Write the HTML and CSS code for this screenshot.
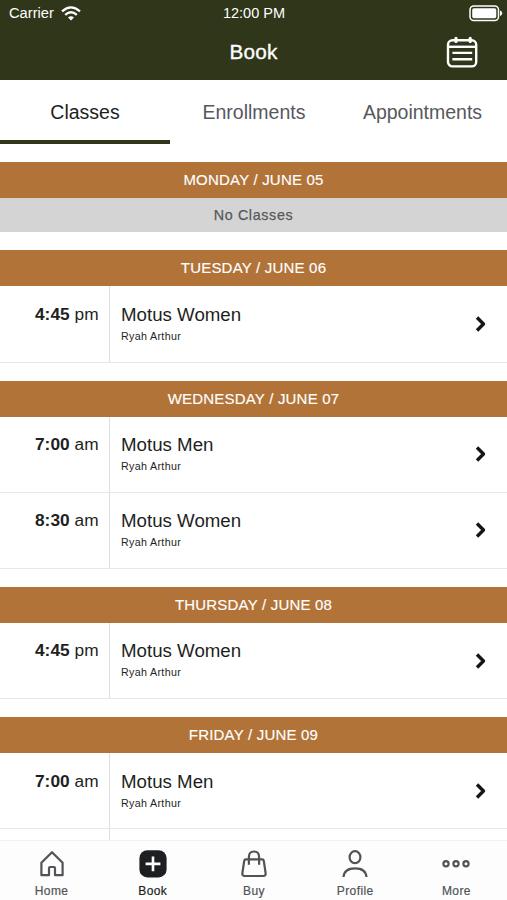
FILE: index.html
```html
<!DOCTYPE html>
<html lang="en">
<head>
<meta charset="utf-8">
<title>Book</title>
<link rel="stylesheet" href="styles.css">
</head>
<body>
<div class="app">
  <header class="header">
    <div class="status">
      <div class="carrier"><span>Carrier</span>
        <svg width="20" height="15" viewBox="0 0 20 15" fill="none" stroke="#fff" stroke-width="2.3"><path d="M1 5.3Q10-2.6 19 5.3"/><path d="M4.2 8.8Q10 3.7 15.8 8.8"/><path d="M10 14.6 7 11.5Q10 9 13 11.5Z" fill="#fff" stroke="none"/></svg>
      </div>
      <div class="clock">12:00 PM</div>
      <svg class="battery" width="34" height="17" viewBox="0 0 34 17"><rect x="1" y="1" width="28.5" height="14.5" rx="3.8" fill="none" stroke="#fff" stroke-width="1.5"/><rect x="3.2" y="3.2" width="24.1" height="10.1" rx="1.8" fill="#fff"/><path d="M31 5.4Q33.2 6.2 33.2 8.2T31 11Z" fill="#fff"/></svg>
    </div>
    <div class="titlebar">
      <h1 class="title">Book</h1>
      <svg class="calendar" width="32" height="32" viewBox="0 0 32 32" fill="none" stroke="#fff" stroke-width="2.4"><rect x="2" y="4.2" width="28.2" height="26.2" rx="4.5"/><path d="M2 10.8H30"/><path d="M10 2.3V5.5M24.2 2.3V5.5" stroke-width="3.2" stroke-linecap="round"/><path d="M6.4 16.9H26.2M6.4 23.3H26.2"/></svg>
    </div>
  </header>
  <nav class="tabs">
    <div class="tab active">Classes</div>
    <div class="tab">Enrollments</div>
    <div class="tab">Appointments</div>
  </nav>
  <main class="schedule">
    <section class="day">
      <h2 class="date">MONDAY / JUNE 05</h2>
      <div class="empty">No Classes</div>
    </section>
    <section class="day">
      <h2 class="date">TUESDAY / JUNE 06</h2>
      <div class="row"><div class="time"><b>4:45</b> pm</div><div class="info"><div class="name">Motus Women</div><div class="coach">Ryah Arthur</div></div><svg class="chevron" width="12" height="18" viewBox="0 0 12 18"><path d="M2 2.5 8.5 9 2 15.5"/></svg></div>
    </section>
    <section class="day">
      <h2 class="date">WEDNESDAY / JUNE 07</h2>
      <div class="row"><div class="time"><b>7:00</b> am</div><div class="info"><div class="name">Motus Men</div><div class="coach">Ryah Arthur</div></div><svg class="chevron" width="12" height="18" viewBox="0 0 12 18"><path d="M2 2.5 8.5 9 2 15.5"/></svg></div>
      <div class="row"><div class="time"><b>8:30</b> am</div><div class="info"><div class="name">Motus Women</div><div class="coach">Ryah Arthur</div></div><svg class="chevron" width="12" height="18" viewBox="0 0 12 18"><path d="M2 2.5 8.5 9 2 15.5"/></svg></div>
    </section>
    <section class="day">
      <h2 class="date">THURSDAY / JUNE 08</h2>
      <div class="row"><div class="time"><b>4:45</b> pm</div><div class="info"><div class="name">Motus Women</div><div class="coach">Ryah Arthur</div></div><svg class="chevron" width="12" height="18" viewBox="0 0 12 18"><path d="M2 2.5 8.5 9 2 15.5"/></svg></div>
    </section>
    <section class="day">
      <h2 class="date">FRIDAY / JUNE 09</h2>
      <div class="row"><div class="time"><b>7:00</b> am</div><div class="info"><div class="name">Motus Men</div><div class="coach">Ryah Arthur</div></div><svg class="chevron" width="12" height="18" viewBox="0 0 12 18"><path d="M2 2.5 8.5 9 2 15.5"/></svg></div>
      <div class="row"><div class="time"></div></div>
    </section>
  </main>
  <nav class="bottom">
    <div class="item"><svg width="28" height="28" viewBox="0 0 28 28"><path d="M3.4 12.7 14 2.2 24.6 12.7V25.2H17V18.2Q17 17 15.8 17H12.2Q11 17 11 18.2V25.2H3.4Z"/></svg><span>Home</span></div>
    <div class="item current"><svg width="28" height="28" viewBox="0 0 28 28"><rect x=".4" y=".2" width="27.2" height="27.2" rx="8" fill="#1e1f23" stroke="none"/><path d="M14 6.5V21.3M6.6 13.9H21.4" stroke="#fff" stroke-width="2.6"/></svg><span>Book</span></div>
    <div class="item"><svg width="28" height="28" viewBox="0 0 28 28"><path d="M5.9 9.3H22.1Q23.6 9.3 23.8 10.8L25.6 23Q26 26 23.2 26H4.8Q2 26 2.4 23L4.2 10.8Q4.4 9.3 5.9 9.3ZM8.9 14.8V6.9Q8.9 1.5 14 1.5T19.1 6.9V14.8"/></svg><span>Buy</span></div>
    <div class="item"><svg width="28" height="28" viewBox="0 0 28 28"><ellipse cx="14" cy="7.2" rx="5.4" ry="6"/><path d="M2.5 27C3 20.8 8 18.3 14 18.3S25 20.8 25.5 27"/></svg><span>Profile</span></div>
    <div class="item"><svg width="28" height="28" viewBox="0 0 28 28"><circle cx="4" cy="13.8" r="2.6"/><circle cx="14" cy="13.8" r="2.6"/><circle cx="24" cy="13.8" r="2.6"/></svg><span>More</span></div>
  </nav>
</div>
</body>
</html>
```

FILE: styles.css
```css
* { box-sizing: border-box; }
body { margin: 0; background: #fff; color: #1e1f23; font-family: "Liberation Sans", Arial, sans-serif; }
svg { display: block; flex: none; }
.app { display: flex; flex-direction: column; width: 507px; height: 900px; overflow: hidden; }
.header { flex: none; height: 80px; background: #303619; color: #fff; }
.status { display: grid; grid-template-columns: 1fr auto 1fr; align-items: center; height: 25px; padding: 0 4px 0 9px; }
.carrier { display: flex; align-items: center; gap: 7px; font-size: 14.7px; }
.carrier svg { margin-top: 1px; }
.clock { font-size: 14.5px; margin-left: -4px; }
.battery { justify-self: end; margin-top: 1px; }
.titlebar { display: grid; grid-template-columns: 1fr auto 1fr; align-items: center; height: 54px; }
.title { grid-column: 2; margin: 0; font-size: 20.7px; font-weight: 400; letter-spacing: .25px; -webkit-text-stroke: .35px #fff; }
.calendar { justify-self: end; margin-right: 29px; }
.tabs { flex: none; display: grid; grid-template-columns: 170px 168px 169px; height: 64px; }
.tab { padding-top: 21px; text-align: center; font-size: 19.5px; line-height: 22px; color: #56585d; border-bottom: 4px solid transparent; }
.tab.active { color: #1e1f23; border-color: #303619; }
.schedule { flex: 1; min-height: 0; overflow: hidden; padding-top: 18px; }
.day { margin-bottom: 18px; }
.date { margin: 0; height: 36px; line-height: 36px; background: #b27339; color: #fff; text-align: center; font-size: 15px; font-weight: 400; letter-spacing: .2px; -webkit-text-stroke: .15px #fff; }
.empty { height: 34.4px; line-height: 34px; background: #d4d4d4; color: #57585a; text-align: center; font-size: 14.3px; letter-spacing: .65px; -webkit-text-stroke: .25px #57585a; }
.row { display: flex; height: 76.2px; border-bottom: 1px solid #e8e8e9; }
.time { width: 110px; padding: 17.4px 10.3px 0 0; border-right: 1px solid #dcdde0; text-align: right; font-size: 17.3px; line-height: 21px; letter-spacing: .05px; }
.info { flex: 1; padding: 17.4px 0 0 11px; }
.name { font-size: 18.7px; line-height: 21px; }
.coach { margin-top: 5px; font-size: 10.7px; line-height: 13px; letter-spacing: .33px; }
.chevron { align-self: center; margin: 0 20.5px 0 0; fill: none; stroke: #141518; stroke-width: 3.4; stroke-linejoin: round; }
.bottom { flex: none; display: grid; grid-template-columns: repeat(5, 1fr); height: 60px; background: #fdfdfd; border-top: 1px solid #f1f2f2; padding-left: 1px; }
.item { display: flex; flex-direction: column; align-items: center; padding-top: 9px; color: #515357; font-size: 12px; line-height: 14px; letter-spacing: .4px; }
.item svg { fill: none; stroke: #515357; stroke-width: 2.2; stroke-linejoin: round; }
.item span { margin-top: 6px; -webkit-text-stroke: .2px currentColor; }
.item.current { color: #1e1f23; }
```
